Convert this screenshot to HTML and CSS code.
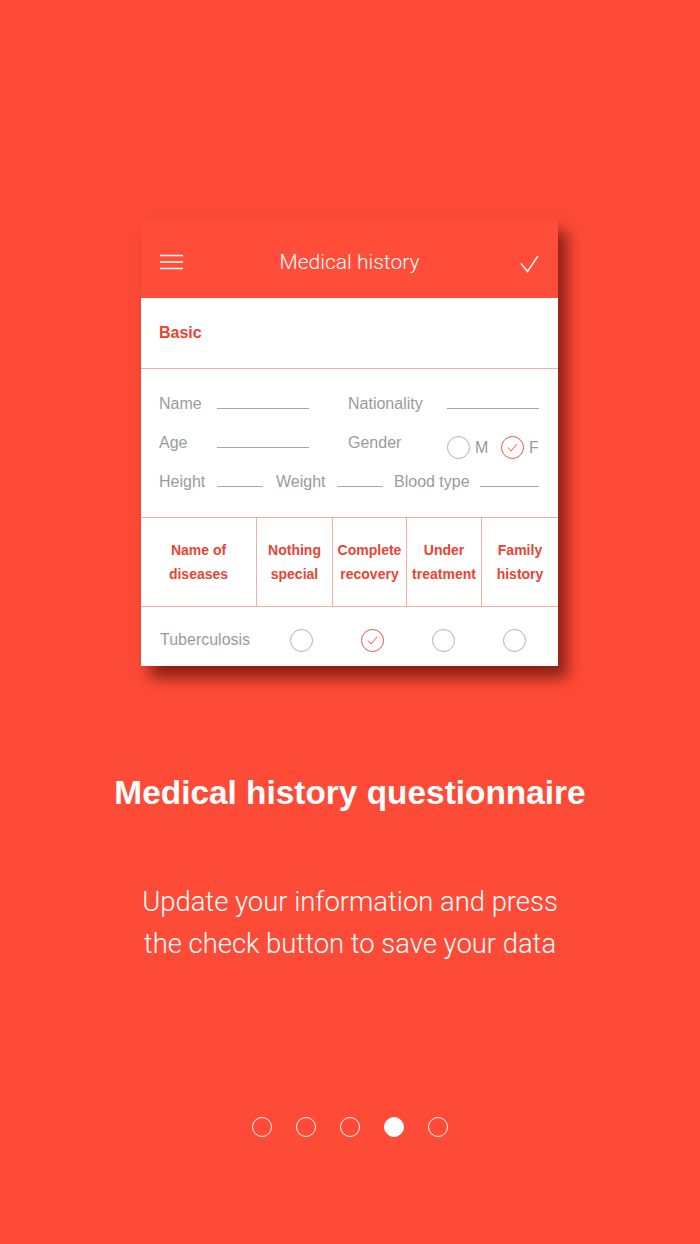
FILE: index.html
```html
<!DOCTYPE html>
<html lang="en">
<head>
    <meta charset="UTF-8">
    <meta name="viewport" content="width=device-width, initial-scale=1.0">
    <title>Medical history</title>
    <link rel="stylesheet" href="styles.css">
</head>
<body>
    <div class="screen">
        <!-- Karte: Formular -->
        <div class="card">
            <div class="card-head">
                <svg class="menu" width="23" height="16" viewBox="0 0 23 16">
                    <path d="M0 1.5H23M0 8H23M0 14.5H23" stroke="#fff" stroke-width="1.3" fill="none"/>
                </svg>
                <div class="card-title">Medical history</div>
                <svg class="ok" width="19" height="18" viewBox="0 0 19 18">
                    <path d="M1 8.5L7.5 16.5L18 1" stroke="#fff" stroke-width="1.4" fill="none"/>
                </svg>
            </div>

            <div class="section-title">Basic</div>

            <div class="basic">
                <div class="row grid">
                    <span class="label">Name</span>
                    <span class="line"></span>
                    <span></span>
                    <span class="label">Nationality</span>
                    <span class="line"></span>
                </div>
                <div class="row grid">
                    <span class="label">Age</span>
                    <span class="line"></span>
                    <span></span>
                    <span class="label">Gender</span>
                    <span class="gender">
                        <span class="radio"></span><span class="label opt">M</span>
                        <span class="radio on"><svg width="11" height="9" viewBox="0 0 11 9"><path d="M1 4.5L4 8L10 1" stroke="#f0533f" stroke-width="1" fill="none"/></svg></span><span class="label opt">F</span>
                    </span>
                </div>
                <div class="row flat">
                    <span class="label w-height">Height</span>
                    <span class="line short"></span>
                    <span class="label w-weight">Weight</span>
                    <span class="line short"></span>
                    <span class="label w-blood">Blood type</span>
                    <span class="line blood"></span>
                </div>
            </div>

            <div class="table-head">
                <div class="th">Name of<br>diseases</div>
                <div class="th">Nothing<br>special</div>
                <div class="th">Complete<br>recovery</div>
                <div class="th">Under<br>treatment</div>
                <div class="th">Family<br>history</div>
            </div>

            <div class="table-row">
                <span class="label disease">Tuberculosis</span>
                <span class="radio big"></span>
                <span class="radio big on"><svg width="11" height="9" viewBox="0 0 11 9"><path d="M1 4.5L4 8L10 1" stroke="#f0533f" stroke-width="1" fill="none"/></svg></span>
                <span class="radio big"></span>
                <span class="radio big"></span>
            </div>
        </div>

        <h1 class="headline">Medical history questionnaire</h1>
        <p class="text">Update your information and press<br>the check button to save your data</p>

        <div class="dots">
            <span class="dot"></span>
            <span class="dot"></span>
            <span class="dot"></span>
            <span class="dot active"></span>
            <span class="dot"></span>
        </div>
    </div>
</body>
</html>
```

FILE: styles.css
```css
body {
    margin: 0;
    background: #fe4b37;
    font-family: "Liberation Sans", Arial, sans-serif;
}
.screen {
    width: 700px;
    height: 1244px;
    display: flex;
    flex-direction: column;
    align-items: center;
    overflow: hidden;
}
.card {
    margin-top: 219px;
    align-self: flex-start;
    margin-left: 141px;
    width: 417px;
    background: #fff;
    box-shadow: 9px 12px 14px rgba(100, 18, 8, 0.75);
}
.card-head {
    height: 72px;
    padding: 7px 19px 0 19px;
    background: #ff4d39;
    display: grid;
    grid-template-columns: 1fr auto 1fr;
    align-items: center;
}
.card-title {
    color: #fff;
    font-family: Roboto, sans-serif;
    font-weight: 300;
    font-size: 21px;
}
.ok {
    justify-self: end;
    margin-top: 4px;
}
.section-title {
    height: 70px;
    line-height: 70px;
    padding-left: 18px;
    color: #ea4431;
    font-weight: bold;
    font-size: 16px;
    border-bottom: 1px solid #f6aea3;
}
.basic {
    padding: 15px 0 16px 18px;
    border-bottom: 1px solid #f6aea3;
}
.row {
    height: 39px;
    align-items: center;
}
.grid {
    display: grid;
    grid-template-columns: 58px 92px 39px 99px 92px;
}
.flat {
    display: flex;
}
.label {
    color: #9b9b9b;
    font-size: 16px;
}
.line {
    display: block;
    height: 9px;
    border-bottom: 1px solid #a5a5a5;
}
.short {
    width: 46px;
}
.blood {
    width: 59px;
}
.w-height {
    width: 58px;
}
.w-weight {
    width: 61px;
    margin-left: 13px;
}
.w-blood {
    width: 86px;
    margin-left: 11px;
}
.gender {
    display: flex;
    align-items: center;
    margin-top: 10px;
}
.opt {
    flex: none;
    margin-left: 5px;
    width: 26px;
}
.radio {
    box-sizing: border-box;
    width: 23px;
    height: 23px;
    border: 1px solid #b0b0b0;
    border-radius: 50%;
    display: flex;
    align-items: center;
    justify-content: center;
    flex: none;
}
.radio.on {
    border-color: #f0533f;
}
.table-head {
    display: grid;
    grid-template-columns: 116px 76px 74px 75px 76px;
    height: 88px;
    border-bottom: 1px solid #f6aea3;
}
.th {
    display: flex;
    align-items: center;
    justify-content: center;
    text-align: center;
    color: #ea4431;
    font-weight: bold;
    font-size: 14px;
    line-height: 24px;
    border-right: 1px solid #f6aea3;
}
.th:last-child {
    border-right: none;
}
.table-row {
    height: 52px;
    padding: 7px 0 0 19px;
    display: flex;
    align-items: center;
    gap: 48px;
}
.disease {
    flex: none;
    width: 82px;
}
.headline {
    margin: 107px 0 0;
    color: #fff;
    font-size: 33.4px;
    line-height: 40px;
    font-weight: bold;
}
.text {
    margin: 68px 0 0;
    color: #fff;
    font-family: Roboto, sans-serif;
    font-weight: 300;
    font-size: 27.4px;
    line-height: 42px;
    text-align: center;
}
.dots {
    margin-top: 152px;
    display: flex;
    gap: 24px;
}
.dot {
    box-sizing: border-box;
    width: 20px;
    height: 20px;
    border: 1.5px solid #fff;
    border-radius: 50%;
}
.dot.active {
    background: #fff;
}
```
